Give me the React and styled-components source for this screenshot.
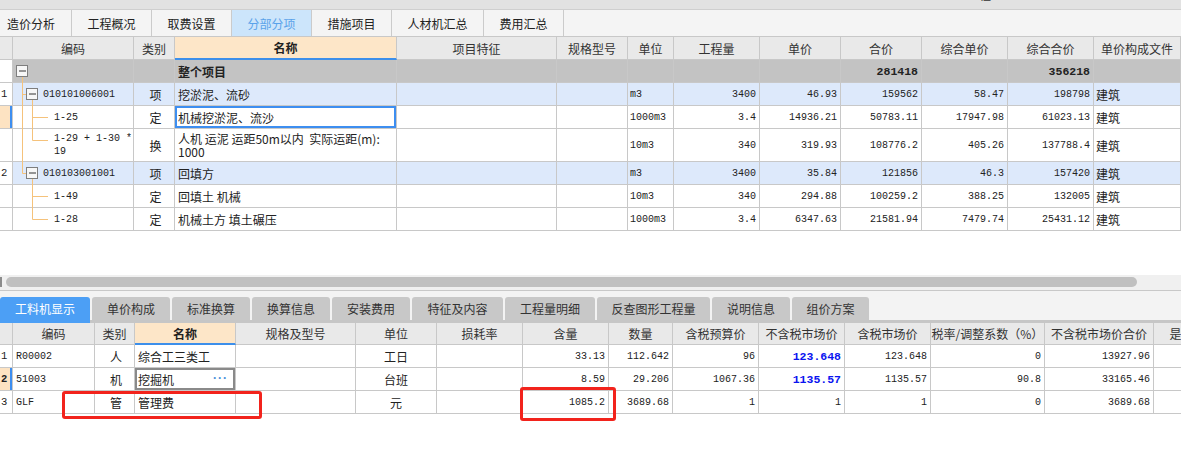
import React from "react";
import styled, { createGlobalStyle, css } from "styled-components";

const GlobalStyle = createGlobalStyle`
  html, body { margin: 0; padding: 0; background: #ffffff; }
  body {
    font-family: "Noto Sans CJK SC", "Liberation Sans", sans-serif;
    font-size: 12px;
    color: #222;
    overflow: hidden;
  }
  * { box-sizing: border-box; }
`;

const TOP_COLS = "13px 121px 41px 222px 160px 71px 46px 86px 81px 81px 86px 86px 87px";
const BOT_COLS = "13px 82px 40px 101px 120px 81px 86px 86px 64px 86px 86px 86px 114px 109px 80px";

const Page = styled.div`
  position: relative;
  width: 1181px;
  height: 464px;
  overflow: hidden;
  background: #fff;
`;

const TitleStrip = styled.div`
  height: 10px;
  background: #e2e2e2;
  border-bottom: 1px solid #cfcfcf;
  overflow: hidden;
  padding-left: 967px;
`;

const TitleText = styled.span`
  display: block;
  margin-top: -12px;
  font-size: 12px;
  line-height: 14px;
  color: #333;
`;

const TabBar = styled.div`
  display: flex;
  height: 27px;
  background: #f4f4f4;
  border-bottom: 1px solid #c8c8c8;
`;

const TopTab = styled.div`
  width: ${(p) => p.$w}px;
  height: 26px;
  border-right: 1px solid #cbcbcb;
  display: flex;
  align-items: center;
  justify-content: ${(p) => (p.$first ? "flex-start" : "center")};
  padding-left: ${(p) => (p.$first ? "7px" : "0")};
  font-size: 12px;
  color: ${(p) => (p.$active ? "#5aa2ea" : "#222")};
  background: ${(p) => (p.$active ? "#cce5fb" : "transparent")};
`;

const Row = styled.div`
  display: grid;
  grid-template-columns: ${(p) => p.$cols};
  height: ${(p) => p.$h}px;
  background: ${(p) => p.$bg || "#fff"};
`;

const HeadCell = styled.div`
  display: flex;
  align-items: center;
  justify-content: center;
  border-right: 1px solid #c8c8c8;
  border-bottom: 1px solid #c8c8c8;
  background: #e9e9e9;
  color: #333;
  font-size: 12px;
  white-space: nowrap;
  overflow: hidden;
  ${(p) =>
    p.$hot &&
    css`
      background: #fde6c8;
      font-weight: bold;
      color: #222;
      border-bottom: 2px solid #3d8fea;
    `}
`;

const Cell = styled.div`
  position: relative;
  display: flex;
  align-items: center;
  justify-content: ${(p) =>
    p.$align === "right" ? "flex-end" : p.$align === "center" ? "center" : "flex-start"};
  padding: 0 ${(p) => (p.$align === "right" ? "3px" : "0")} 0
    ${(p) => (p.$pl !== undefined ? p.$pl : 3)}px;
  border-right: 1px solid #c8c8c8;
  border-bottom: 1px solid #c8c8c8;
  white-space: pre;
  overflow: ${(p) => (p.$tree ? "visible" : "hidden")};
  font-family: ${(p) =>
    p.$mono ? `"Liberation Mono", "Noto Sans CJK SC", monospace` : `"Noto Sans CJK SC", "Liberation Sans", sans-serif`};
  font-size: ${(p) => (p.$mono ? (p.$bold ? "11.5px" : "10px") : "12px")};
  font-weight: ${(p) => (p.$bold ? "bold" : "normal")};
  color: ${(p) => (p.$blue ? "#0a14f0" : "#222")};
  line-height: 13px;
  background: ${(p) => p.$bg || "transparent"};
  ${(p) =>
    p.$selected &&
    css`
      box-shadow: inset 0 0 0 2px #3d8ef0;
    `}
  ${(p) =>
    p.$focus &&
    css`
      box-shadow: inset 0 0 0 2px #8a8a8a;
    `}
  ${(p) =>
    p.$marker &&
    css`
      background: #fde3c2;
      box-shadow: inset -2px 0 0 #3d8ef0;
    `}
`;

const NumCell = styled(Cell)`
  padding-left: 1px;
  font-family: "Liberation Mono", monospace;
  font-size: 10.5px;
`;

const TreeSvg = styled.svg`
  position: absolute;
  left: 0;
  top: 0;
  overflow: visible;
  pointer-events: none;
`;

const CodeText = styled.span`
  position: relative;
`;

const Dots = styled.span`
  position: absolute;
  right: 7px;
  top: 4px;
  color: #4a90d9;
  font-weight: bold;
  font-size: 12px;
  letter-spacing: 1px;
  font-family: "Liberation Sans", sans-serif;
`;

const BlankArea = styled.div`
  height: 44px;
  background: #fff;
`;

const ScrollTrack = styled.div`
  display: flex;
  align-items: center;
  height: 15px;
  background: #f0f0f0;
  padding-bottom: 2px;
`;

const ScrollArrow = styled.div`
  width: 2px;
  height: 10px;
  background: #8c8c8c;
`;

const ScrollThumb = styled.div`
  margin-left: 4px;
  width: 1131px;
  height: 10px;
  border-radius: 5px;
  background: #c0c0c0;
`;

const Splitter = styled.div`
  height: 1px;
  background: #c8c8c8;
`;

const BottomTabBar = styled.div`
  display: flex;
  align-items: flex-end;
  gap: 2px;
  height: 32px;
  padding-top: 6px;
  background: #f3f3f3;
  border-bottom: 3px solid #c6c6c6;
`;

const BottomTab = styled.div`
  width: ${(p) => p.$w}px;
  height: ${(p) => (p.$active ? 26 : 23)}px;
  margin-bottom: ${(p) => (p.$active ? -3 : 0)}px;
  padding-bottom: ${(p) => (p.$active ? 3 : 0)}px;
  border-radius: 3px 3px 0 0;
  display: flex;
  align-items: center;
  justify-content: center;
  font-size: 12px;
  color: ${(p) => (p.$active ? "#fff" : "#333")};
  background: ${(p) => (p.$active ? "#4c9ff5" : "#c8c8c8")};
`;

const Annot = styled.div`
  position: absolute;
  left: ${(p) => p.$x}px;
  top: ${(p) => p.$y}px;
  width: ${(p) => p.$w}px;
  height: ${(p) => p.$h}px;
  border: 3px solid #f2231c;
  border-radius: 3px;
  pointer-events: none;
`;

const LINE = "#f5c27b";

const TREES = {
  root: { box: 3, lines: [[9.5, 17, 9.5, 23]] },
  item1: {
    box: 13,
    lines: [
      [9.5, 0, 9.5, 23],
      [9.5, 11.5, 13, 11.5],
      [19.5, 17, 19.5, 23],
    ],
  },
  mid: {
    lines: [
      [9.5, 0, 9.5, 23],
      [19.5, 0, 19.5, 23],
      [19.5, 11.5, 35, 11.5],
    ],
  },
  lastTall: {
    lines: [
      [9.5, 0, 9.5, 33],
      [19.5, 0, 19.5, 11.5],
      [19.5, 11.5, 35, 11.5],
    ],
  },
  item2: {
    box: 13,
    lines: [
      [9.5, 0, 9.5, 11.5],
      [9.5, 11.5, 13, 11.5],
      [19.5, 17, 19.5, 23],
    ],
  },
  mid2: {
    lines: [
      [19.5, 0, 19.5, 23],
      [19.5, 11.5, 35, 11.5],
    ],
  },
  last: {
    lines: [
      [19.5, 0, 19.5, 11.5],
      [19.5, 11.5, 35, 11.5],
    ],
  },
};

function Tree({ kind, h }) {
  const t = TREES[kind];
  return (
    <TreeSvg width="40" height={h}>
      {t.lines.map((l, i) => (
        <line key={i} x1={l[0]} y1={l[1]} x2={l[2]} y2={l[3]} stroke={LINE} strokeWidth="1" />
      ))}
      {t.box !== undefined && (
        <g>
          <rect x={t.box + 0.5} y="5.5" width="11" height="11" fill="#f7f7f7" stroke="#7e7e7e" />
          <line x1={t.box + 3} y1="11" x2={t.box + 10} y2="11" stroke="#333" strokeWidth="1" />
        </g>
      )}
    </TreeSvg>
  );
}

const TOP_TABS = [
  ["造价分析", 72, false, true],
  ["工程概况", 80],
  ["取费设置", 80],
  ["分部分项", 80, true],
  ["措施项目", 80],
  ["人材机汇总", 92],
  ["费用汇总", 80],
];

const TOP_HEAD = [
  "", "编码", "类别", "名称", "项目特征", "规格型号", "单位", "工程量",
  "单价", "合价", "综合单价", "综合合价", "单价构成文件",
];

const TOP_ROWS = [
  { kind: "root", tree: "root", pad: 0, code: "", cat: "", name: "整个项目", unit: "", qty: "", price: "", total: "281418", cprice: "", ctotal: "356218", file: "" },
  { kind: "item", num: "1", tree: "item1", pad: 30, code: "010101006001", cat: "项", name: "挖淤泥、流砂", unit: "m3", qty: "3400", price: "46.93", total: "159562", cprice: "58.47", ctotal: "198798", file: "建筑" },
  { kind: "sub", sel: true, tree: "mid", pad: 41, code: "1-25", cat: "定", name: "机械挖淤泥、流沙", unit: "1000m3", qty: "3.4", price: "14936.21", total: "50783.11", cprice: "17947.98", ctotal: "61023.13", file: "建筑" },
  { kind: "sub", h: 33, tree: "lastTall", pad: 41, code: "1-29 + 1-30 *\n19", cat: "换", name: "人机 运泥 运距50m以内  实际运距(m):\n1000", unit: "10m3", qty: "340", price: "319.93", total: "108776.2", cprice: "405.26", ctotal: "137788.4", file: "建筑" },
  { kind: "item", num: "2", tree: "item2", pad: 30, code: "010103001001", cat: "项", name: "回填方", unit: "m3", qty: "3400", price: "35.84", total: "121856", cprice: "46.3", ctotal: "157420", file: "建筑" },
  { kind: "sub", tree: "mid2", pad: 41, code: "1-49", cat: "定", name: "回填土 机械", unit: "10m3", qty: "340", price: "294.88", total: "100259.2", cprice: "388.25", ctotal: "132005", file: "建筑" },
  { kind: "sub", tree: "last", pad: 41, code: "1-28", cat: "定", name: "机械土方 填土碾压", unit: "1000m3", qty: "3.4", price: "6347.63", total: "21581.94", cprice: "7479.74", ctotal: "25431.12", file: "建筑" },
];

const ROW_BG = { root: "#c3c3c3", item: "#dde9fb", sub: "#ffffff" };

const BOTTOM_TABS = [
  ["工料机显示", 90, true],
  ["单价构成", 78],
  ["标准换算", 78],
  ["换算信息", 78],
  ["安装费用", 78],
  ["特征及内容", 91],
  ["工程量明细", 90],
  ["反查图形工程量", 113],
  ["说明信息", 78],
  ["组价方案", 77],
];

const BOT_HEAD = [
  "", "编码", "类别", "名称", "规格及型号", "单位", "损耗率", "含量", "数量",
  "含税预算价", "不含税市场价", "含税市场价", "税率/调整系数（%）", "不含税市场价合价", "是否暂估",
];

const BOT_ROWS = [
  { num: "1", code: "R00002", cat: "人", name: "综合工三类工", unit: "工日", amt: "33.13", qty: "112.642", bud: "96", mkt: "123.648", mktTax: "123.648", rate: "0", sum: "13927.96" },
  { num: "2", marker: true, focus: true, code: "51003", cat: "机", name: "挖掘机", unit: "台班", amt: "8.59", qty: "29.206", bud: "1067.36", mkt: "1135.57", mktTax: "1135.57", rate: "90.8", sum: "33165.46" },
  { num: "3", code: "GLF", cat: "管", name: "管理费", unit: "元", amt: "1085.2", qty: "3689.68", bud: "1", mkt: "1", mktTax: "1", rate: "0", sum: "3689.68", plain: true },
];

export default function App() {
  return (
    <Page>
      <GlobalStyle />
      <TitleStrip>
        <TitleText>工程</TitleText>
      </TitleStrip>
      <TabBar>
        {TOP_TABS.map(([label, w, active, first]) => (
          <TopTab key={label} $w={w} $active={active} $first={first}>
            {label}
          </TopTab>
        ))}
      </TabBar>

      <Row $cols={TOP_COLS} $h={23}>
        {TOP_HEAD.map((h, i) => (
          <HeadCell key={i} $hot={h === "名称"}>
            {h}
          </HeadCell>
        ))}
      </Row>
      {TOP_ROWS.map((r, i) => {
        const h = r.h || 23;
        const bold = r.kind === "root";
        return (
          <Row key={i} $cols={TOP_COLS} $h={h} $bg={ROW_BG[r.kind]}>
            <NumCell $bg="#fff" $marker={r.sel}>{r.num || ""}</NumCell>
            <Cell $tree $pl={r.pad} $mono>
              <Tree kind={r.tree} h={h} />
              <CodeText>{r.code}</CodeText>
            </Cell>
            <Cell $align="center">{r.cat}</Cell>
            <Cell $bold={bold} $selected={r.sel}>{r.name}</Cell>
            <Cell />
            <Cell />
            <Cell $mono $pl={2}>{r.unit}</Cell>
            <Cell $mono $align="right">{r.qty}</Cell>
            <Cell $mono $align="right">{r.price}</Cell>
            <Cell $mono $align="right" $bold={bold}>{r.total}</Cell>
            <Cell $mono $align="right">{r.cprice}</Cell>
            <Cell $mono $align="right" $bold={bold}>{r.ctotal}</Cell>
            <Cell $pl={2}>{r.file}</Cell>
          </Row>
        );
      })}

      <BlankArea />
      <ScrollTrack>
        <ScrollArrow />
        <ScrollThumb />
      </ScrollTrack>
      <Splitter />
      <BottomTabBar>
        {BOTTOM_TABS.map(([label, w, active]) => (
          <BottomTab key={label} $w={w} $active={active}>
            {label}
          </BottomTab>
        ))}
      </BottomTabBar>

      <Row $cols={BOT_COLS} $h={22}>
        {BOT_HEAD.map((h, i) => (
          <HeadCell key={i} $hot={h === "名称"}>
            {h}
          </HeadCell>
        ))}
      </Row>
      {BOT_ROWS.map((r, i) => (
        <Row key={i} $cols={BOT_COLS} $h={23}>
          <NumCell $marker={r.marker} $bold={r.marker}>{r.num}</NumCell>
          <Cell $mono>{r.code}</Cell>
          <Cell $align="center">{r.cat}</Cell>
          <Cell $focus={r.focus}>
            {r.name}
            {r.focus && <Dots>···</Dots>}
          </Cell>
          <Cell />
          <Cell $align="center" $pl={0}>{r.unit}</Cell>
          <Cell />
          <Cell $mono $align="right">{r.amt}</Cell>
          <Cell $mono $align="right">{r.qty}</Cell>
          <Cell $mono $align="right">{r.bud}</Cell>
          <Cell $mono $align="right" $bold={!r.plain} $blue={!r.plain}>{r.mkt}</Cell>
          <Cell $mono $align="right">{r.mktTax}</Cell>
          <Cell $mono $align="right">{r.rate}</Cell>
          <Cell $mono $align="right">{r.sum}</Cell>
          <Cell />
        </Row>
      ))}

      <Annot $x={62} $y={391} $w={200} $h={28} />
      <Annot $x={520} $y={387} $w={96} $h={34} />
    </Page>
  );
}
